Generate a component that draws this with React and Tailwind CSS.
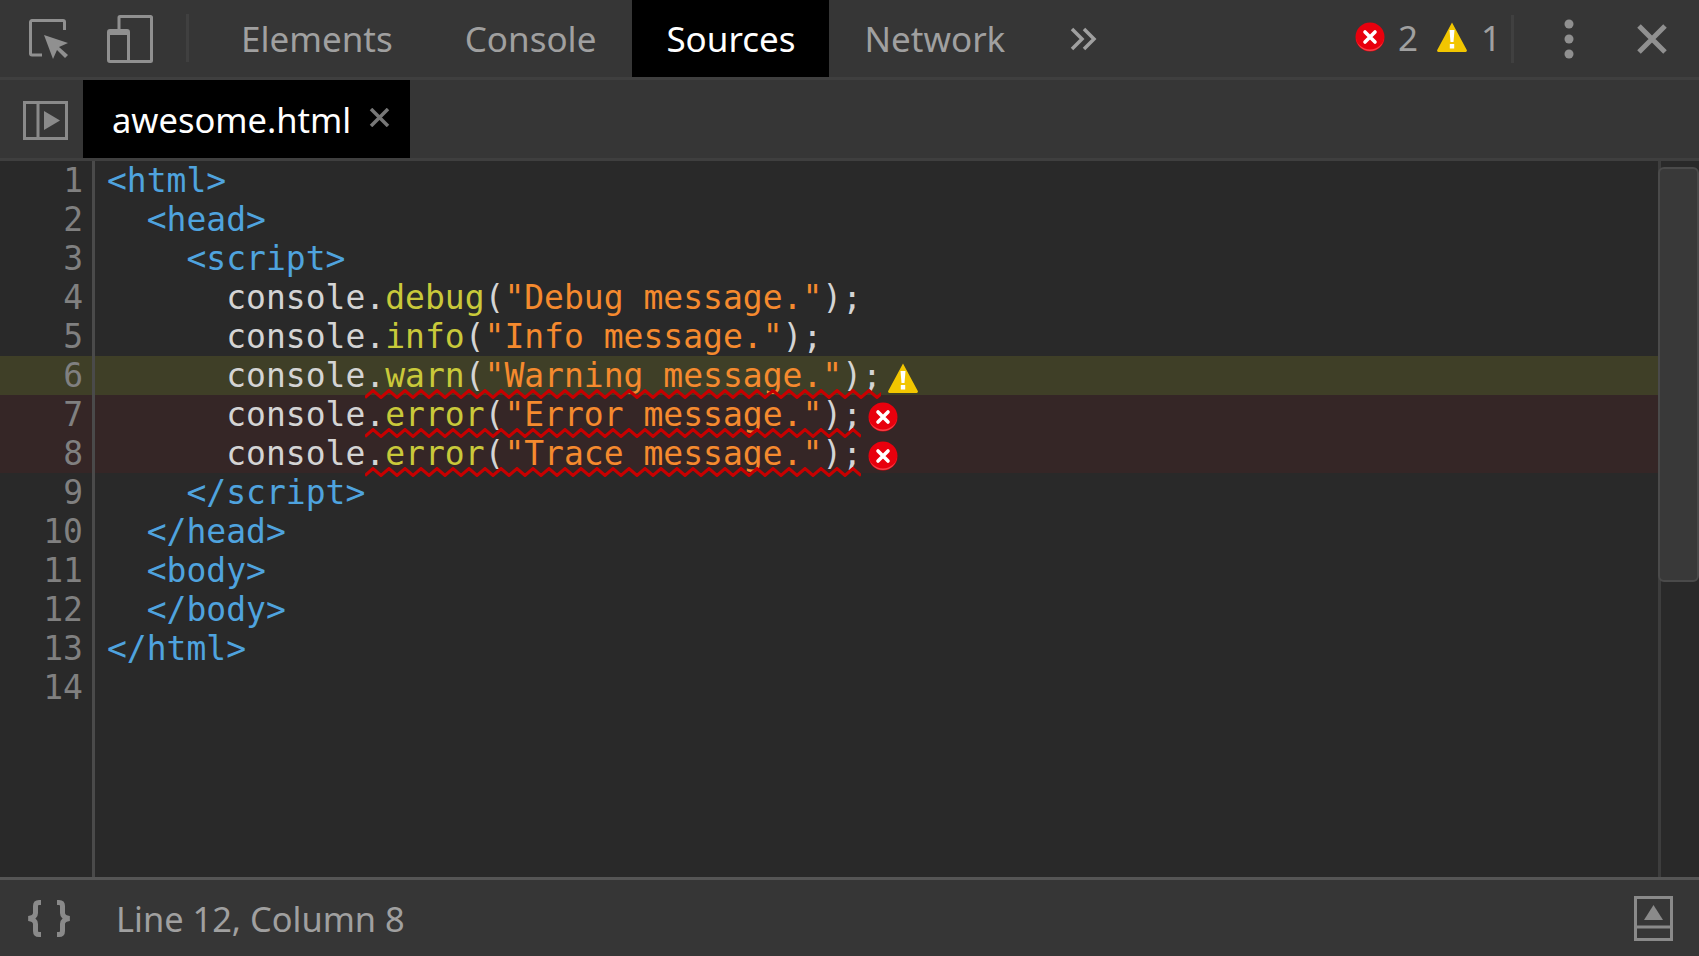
import React from "react";

const UI_FONT = "[font-family:'Noto_Sans',sans-serif]";

const TAG = "text-[#4fa3de]";
const BASE = "text-[#d4d4d4]";
const METHOD = "text-[#c9c93a]";
const STR = "text-[#f58a2e]";

const lines = [
  { parts: [["<html>", TAG]] },
  { parts: [["  ", BASE], ["<head>", TAG]] },
  { parts: [["    ", BASE], ["<script>", TAG]] },
  { parts: [["      console.", BASE], ["debug", METHOD], ["(", BASE], ['"Debug message."', STR], [");", BASE]] },
  { parts: [["      console.", BASE], ["info", METHOD], ["(", BASE], ['"Info message."', STR], [");", BASE]] },
  { parts: [["      console.", BASE], ["warn", METHOD], ["(", BASE], ['"Warning message."', STR], [");", BASE]], level: "warn", squiggle: 516 },
  { parts: [["      console.", BASE], ["error", METHOD], ["(", BASE], ['"Error message."', STR], [");", BASE]], level: "error", squiggle: 496 },
  { parts: [["      console.", BASE], ["error", METHOD], ["(", BASE], ['"Trace message."', STR], [");", BASE]], level: "error", squiggle: 496 },
  { parts: [["    ", BASE], ["</script>", TAG]] },
  { parts: [["  ", BASE], ["</head>", TAG]] },
  { parts: [["  ", BASE], ["<body>", TAG]] },
  { parts: [["  ", BASE], ["</body>", TAG]] },
  { parts: [["</html>", TAG]] },
  { parts: [] },
];

const ErrorIcon = ({ className }) => (
  <svg className={className} width="30" height="30" viewBox="0 0 30 30">
    <circle cx="15" cy="15" r="14.5" fill="#e8000d" />
    <path d="M1 15a14 14 0 0 0 28 0a14 12.5 0 0 1-28 0z" fill="#ff6b70" opacity="0.6" />
    <path d="M10 10l10 10M20 10L10 20" stroke="#fff" strokeWidth="3.6" strokeLinecap="round" />
  </svg>
);

const WarnIcon = ({ className }) => (
  <svg className={className} width="30" height="30" viewBox="0 0 30 30">
    <path d="M15 0.500L29.500 27.500a1.500 1.500 0 0 1-1.300 2.500H1.800a1.500 1.500 0 0 1-1.300-2.500z" fill="#f2c600" />
    <path d="M12.500 8h5l-1 12h-3zM12.800 22h4.400v4.500h-4.400z" fill="#fff" />
  </svg>
);

// wavy underline under a line with a message, hangs over the next row
const Squiggle = ({ width }) => {
  let d = "M0 8.500";
  let up = true;
  for (let x = 8; x <= width + 4; x += 8) {
    d += ` L${x} ${up ? 1.5 : 8.5}`;
    up = !up;
  }
  return (
    <svg
      className="absolute left-[365px] top-[33px] z-10 pointer-events-none"
      width={width}
      height="10"
    >
      <path d={d} fill="none" stroke="#c80000" strokeWidth="3" />
    </svg>
  );
};

const Tab = ({ label, active, pad }) => (
  <div
    className={`h-full flex items-center justify-center pt-[1px] ${pad} ${
      active ? "bg-black text-white" : "text-[#a0a0a0]"
    }`}
  >
    {label}
  </div>
);

const App = () => {
  return (
    <div className={`w-[1699px] h-[956px] flex flex-col bg-[#363636] overflow-hidden ${UI_FONT}`}>
      {/* Main toolbar */}
      <div className="h-[80px] flex-none flex border-b-[3px] border-[#3f3f3f] text-[35px]">
        <div className="flex items-center pl-[29px] w-[186px]">
          <svg width="40" height="40" viewBox="0 0 40 40" fill="none">
            <path d="M13 36H3a1.5 1.5 0 0 1-1.5-1.5V3A1.5 1.5 0 0 1 3 1.5h31A1.5 1.5 0 0 1 35.5 3v8" stroke="#909090" strokeWidth="3" />
            <path d="M15 16l24 8-9 4 9 8-3 3-8-8-4 9z" fill="#909090" />
          </svg>
          <svg className="ml-[38px]" width="46" height="48" viewBox="0 0 46 48" fill="none">
            <path d="M12 14V2.5A1 1 0 0 1 13 1.500H43.500A1 1 0 0 1 44.500 2.500V45.500A1 1 0 0 1 43.500 46.500H3A1.500 1.500 0 0 1 1.500 45V17A1.500 1.500 0 0 1 3 15.500H20A1.500 1.500 0 0 1 21.500 17V46" stroke="#909090" strokeWidth="3" />
            <path d="M1 15h21v5H1z" fill="#909090" />
          </svg>
        </div>
        <div className="w-[3px] h-[48px] mt-[14px] bg-[#404040]" />
        <div className="flex ml-[16px]">
          <Tab label="Elements" pad="px-[36px]" />
          <Tab label="Console" pad="px-[36px]" />
          <Tab label="Sources" pad="px-[34px]" active />
          <Tab label="Network" pad="px-[35px]" />
        </div>
        <div className="flex items-center ml-[30px]">
          <svg width="27" height="24" viewBox="0 0 27 24" fill="none">
            <path d="M2 2l10 10L2 22M14 2l10 10-10 10" stroke="#a0a0a0" strokeWidth="3.5" />
          </svg>
        </div>
        <div className="flex-1" />
        <div className="flex items-center text-[#a0a0a0]">
          <ErrorIcon className="mb-[4px]" />
          <span className="ml-[13px] w-[38px]">2</span>
          <WarnIcon className="ml-[1px] mb-[4px]" />
          <span className="ml-[14px] w-[17px]">1</span>
          <div className="w-[3px] h-[48px] ml-[13px] bg-[#404040]" />
          <svg className="ml-[49px]" width="12" height="40" viewBox="0 0 12 40">
            <circle cx="6" cy="5" r="4.500" fill="#909090" />
            <circle cx="6" cy="20" r="4.500" fill="#909090" />
            <circle cx="6" cy="35" r="4.500" fill="#909090" />
          </svg>
          <svg className="ml-[62px] mr-[32px]" width="30" height="30" viewBox="0 0 30 30">
            <path d="M2 2l26 26M28 2L2 28" stroke="#909090" strokeWidth="5" />
          </svg>
        </div>
      </div>

      {/* File tab row */}
      <div className="h-[81px] flex-none flex border-b-[3px] border-[#3f3f3f]">
        <div className="w-[83px] flex items-center pl-[23px]">
          <svg className="mt-[2px]" width="45" height="39" viewBox="0 0 45 39" fill="none">
            <rect x="1.500" y="1.500" width="42" height="36" stroke="#8a8a8a" strokeWidth="3" />
            <path d="M15 1v37" stroke="#8a8a8a" strokeWidth="3" />
            <path d="M21 10l16 9.500L21 29z" fill="#8a8a8a" />
          </svg>
        </div>
        <div className="w-[327px] h-[78px] bg-black flex items-center pl-[29px] text-[34.5px] text-white">
          <span className="pt-[2px]">awesome.html</span>
          <svg className="ml-[18px] mb-[4px]" width="21" height="19" viewBox="0 0 21 19">
            <path d="M2 1l17 17M19 1L2 18" stroke="#777" strokeWidth="3.500" />
          </svg>
        </div>
      </div>

      {/* Editor */}
      <div className="flex-1 flex min-h-0 bg-[#292929] font-['DejaVu_Sans_Mono',monospace] text-[33px]">
        <div className="flex-1 relative">
          <div className="absolute left-[92px] top-0 bottom-0 w-[3px] bg-[#4a4a4a] z-10" />
          {lines.map((line, i) => (
            <div
              key={i}
              className={`relative h-[39px] leading-[39px] flex items-center ${
                line.level === "warn" ? "bg-[#3f3f27]" : line.level === "error" ? "bg-[#352626]" : ""
              }`}
            >
              <div className="w-[83px] flex-none text-right text-[#808080]">{i + 1}</div>
              <div className="ml-[24px] whitespace-pre">
                {line.parts.map(([text, color], j) => (
                  <span key={j} className={color}>
                    {text}
                  </span>
                ))}
              </div>
              {line.level === "warn" && <WarnIcon className="ml-[6px] relative z-20 mt-[4px]" />}
              {line.level === "error" && <ErrorIcon className="ml-[6px] relative z-20 mt-[4px]" />}
              {line.squiggle && <Squiggle width={line.squiggle} />}
            </div>
          ))}
        </div>
        <div className="w-[41px] flex-none border-l-[3px] border-[#3d3d3d] pt-[6px]">
          <div className="h-[415px] -ml-[3px] bg-[#393939] border-2 border-[#4a4a4a] rounded-[6px]" />
        </div>
      </div>

      {/* Status bar */}
      <div className="h-[79px] flex-none flex items-center border-t-[3px] border-[#555555]">
        <svg className="ml-[26px]" width="46" height="37" viewBox="0 0 46 37" fill="none">
          <path d="M15 2.500h-2q-3.500 0-3.500 3.500v7q0 4.500-7 5.500q7 1 7 5.500v7q0 3.500 3.500 3.500h2M31 2.500h2q3.500 0 3.500 3.500v7q0 4.500 7 5.500q-7 1-7 5.500v7q0 3.500-3.500 3.500h-2" stroke="#8a8a8a" strokeWidth="5" />
        </svg>
        <span className="ml-[44px] pt-[1px] text-[34.4px] text-[#a0a0a0]">Line 12, Column 8</span>
        <div className="flex-1" />
        <svg className="mr-[26px]" width="39" height="45" viewBox="0 0 39 45" fill="none">
          <rect x="1.500" y="1.500" width="36" height="42" stroke="#8a8a8a" strokeWidth="3" />
          <path d="M1 31h37" stroke="#8a8a8a" strokeWidth="3" />
          <path d="M19.500 9L29 24H10z" fill="#8a8a8a" />
        </svg>
      </div>
    </div>
  );
};

export default App;
